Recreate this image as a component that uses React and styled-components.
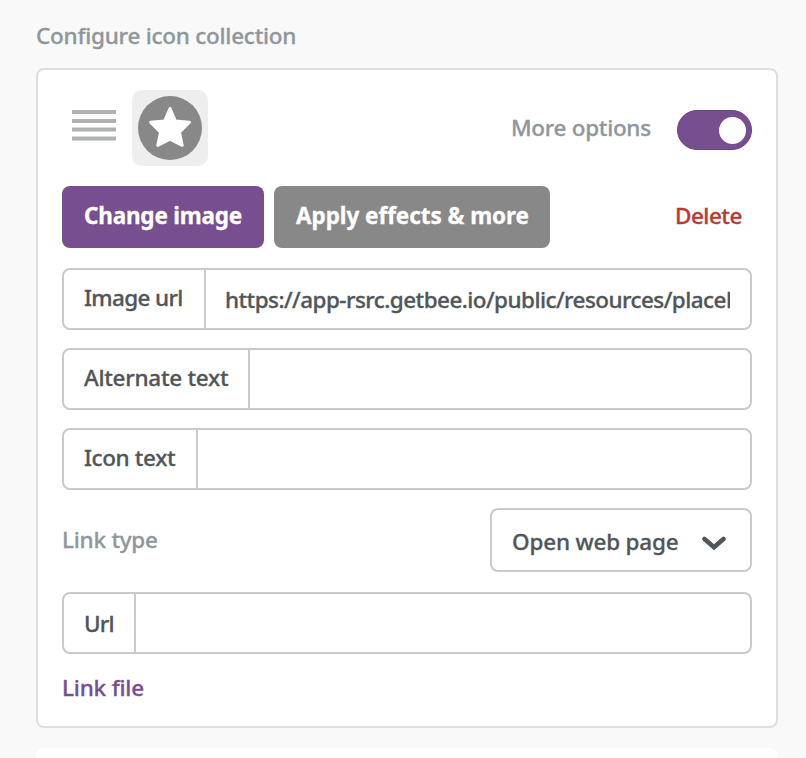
import React from 'react';
import styled, { createGlobalStyle } from 'styled-components';

const fields = [
    { label: 'Image url', value: 'https://app-rsrc.getbee.io/public/resources/placeholder.png', labelWidth: 143, tracking: -0.65 },
    { label: 'Alternate text', value: '', labelWidth: 187, tracking: -0.27 },
    { label: 'Icon text', value: '', labelWidth: 135, tracking: -0.38 },
];

function Field({ label, value, labelWidth, tracking, drop }) {
    return (
        <FieldWrapper>
            <FieldLabel $width={labelWidth} $drop={drop}>
                <Text $tracking={tracking}>{label}</Text>
            </FieldLabel>
            <FieldInput defaultValue={value} aria-label={label} />
        </FieldWrapper>
    );
}

export default function App() {
    return (
        <>
            <GlobalStyle />
            <Panel>
                <Heading><Text $tracking={-0.25}>Configure icon collection</Text></Heading>
                <Card>
                    <HeaderRow>
                        <DragHandle>
                            <svg width="44" height="31" viewBox="0 0 44 31">
                                <path d="M0 2h44M0 10.9h44M0 19.6h44M0 28.5h44" stroke="#b0b1b2" strokeWidth="4" />
                            </svg>
                        </DragHandle>
                        <Thumb>
                            <svg width="64" height="64" viewBox="0 0 64 64">
                                <circle cx="32" cy="32" r="32" fill="#888" />
                                <path
                                    d="M32 12.5L37.4 25L51.5 26.2L41.5 36.2L44.2 49.3L32 43.2L19.8 49.3L22.5 36.2L12.5 26.2L26.6 25Z"
                                    fill="#fff"
                                    stroke="#fff"
                                    strokeWidth="3"
                                    strokeLinejoin="round"
                                />
                            </svg>
                        </Thumb>
                        <OptionsLabel><Text $tracking={-0.3}>More options</Text></OptionsLabel>
                        <Toggle role="switch" aria-checked="true" aria-label="More options"><Knob /></Toggle>
                    </HeaderRow>
                    <ActionRow>
                        <ActionButton $width={202} $color="#774f91"><Text $tracking={-0.2}>Change image</Text></ActionButton>
                        <ActionButton $width={276} $color="#888"><Text $tracking={-0.05}>Apply effects &amp; more</Text></ActionButton>
                        <DeleteButton><Text $tracking={-0.5}>Delete</Text></DeleteButton>
                    </ActionRow>
                    {fields.map((field) => <Field key={field.label} {...field} />)}
                    <LinkRow>
                        <MutedLabel><Text $tracking={-0.25}>Link type</Text></MutedLabel>
                        <SelectBox>
                            <Text $tracking={-0.2}>Open web page</Text>
                            <svg width="24" height="15" viewBox="0 0 24 15">
                                <path d="M2.5 3L12 11.2L21.5 3" fill="none" stroke="#505659" strokeWidth="4.6" strokeLinecap="round" />
                            </svg>
                        </SelectBox>
                    </LinkRow>
                    <Field label="Url" value="" labelWidth={73} tracking={-0.8} drop={2} />
                    <LinkFile><Text $tracking={-0.2}>Link file</Text></LinkFile>
                </Card>
                <NextCard />
            </Panel>
        </>
    );
}

const GlobalStyle = createGlobalStyle`
    * {
        box-sizing: border-box;
    }
    body {
        margin: 0;
        background: #f9f9f9;
        font-family: "Noto Sans", "Open Sans", sans-serif;
        font-size: 22.5px;
        font-weight: 500;
        line-height: 32px;
        color: #505659;
        -webkit-text-stroke: 0.3px currentColor;
        overflow: hidden;
    }
    button, input {
        font: inherit;
        color: inherit;
    }
`

const Panel = styled.main`
    width: 806px;
    height: 758px;
    padding: 20px 28px 0 36px;
    overflow: hidden;
`

const Text = styled.span`
    letter-spacing: ${(props) => props.$tracking}px;
    white-space: nowrap;
`

const Heading = styled.div`
    height: 48px;
    color: #90979b;
`

const Card = styled.section`
    height: 660px;
    padding: 20px 24px;
    background: #fff;
    border: 2px solid #dedede;
    border-radius: 8px;
`

const NextCard = styled.section`
    height: 40px;
    margin-top: 20px;
    background: #fff;
    border-radius: 8px;
`

const HeaderRow = styled.div`
    display: flex;
    align-items: center;
    height: 76px;
`

const DragHandle = styled.div`
    display: flex;
    width: 70px;
    padding: 0 0 6px 10px;
`

const Thumb = styled.div`
    display: flex;
    padding: 6px;
    background: #eee;
    border-radius: 10px;
`

const OptionsLabel = styled.div`
    width: 141px;
    margin-left: auto;
    color: #90979b;
`

const Toggle = styled.button`
    display: flex;
    align-items: center;
    justify-content: flex-end;
    width: 75px;
    height: 40px;
    margin: 4px 0 0 25px;
    padding: 0 5px;
    background: #774f91;
    border: 1px solid #6a4385;
    border-radius: 20px;
`

const Knob = styled.span`
    width: 27px;
    height: 27px;
    background: #fff;
    border-radius: 50%;
`

const ActionRow = styled.div`
    display: flex;
    gap: 10px;
    height: 62px;
    margin: 20px 0;
`

const ActionButton = styled.button`
    width: ${(props) => props.$width}px;
    padding: 0 0 2px 22px;
    text-align: left;
    font-weight: 700;
    color: #fff;
    background: ${(props) => props.$color};
    border: 0;
    border-radius: 8px;
`

const DeleteButton = styled.button`
    width: 77px;
    margin-left: auto;
    padding: 0 0 2px;
    text-align: left;
    color: #b93a32;
    background: transparent;
    border: 0;
`

const FieldWrapper = styled.label`
    display: flex;
    height: 62px;
    margin-bottom: 18px;
    border: 2px solid #cacaca;
    border-radius: 8px;
    overflow: hidden;
`

const FieldLabel = styled.span`
    flex: none;
    width: ${(props) => props.$width - 1}px;
    padding: ${(props) => 12 + (props.$drop || 0)}px 0 0 20px;
    border-right: 2px solid #cacaca;
`

const FieldInput = styled.input`
    flex: 1;
    min-width: 0;
    margin: 0 20px 0 19px;
    padding: 1px 0 0;
    letter-spacing: -0.56px;
    background: transparent;
    border: 0;
    outline: 0;
`

const LinkRow = styled.div`
    display: flex;
    justify-content: space-between;
    height: 64px;
    margin-bottom: 20px;
`

const MutedLabel = styled.div`
    padding-top: 16px;
    color: #90979b;
`

const SelectBox = styled.div`
    display: flex;
    align-items: center;
    justify-content: space-between;
    width: 262px;
    padding: 3px 24px 0 20px;
    border: 2px solid #cacaca;
    border-radius: 8px;

    svg {
        margin-top: 4px;
    }
`

const LinkFile = styled.a`
    display: block;
    color: #774f91;
`
